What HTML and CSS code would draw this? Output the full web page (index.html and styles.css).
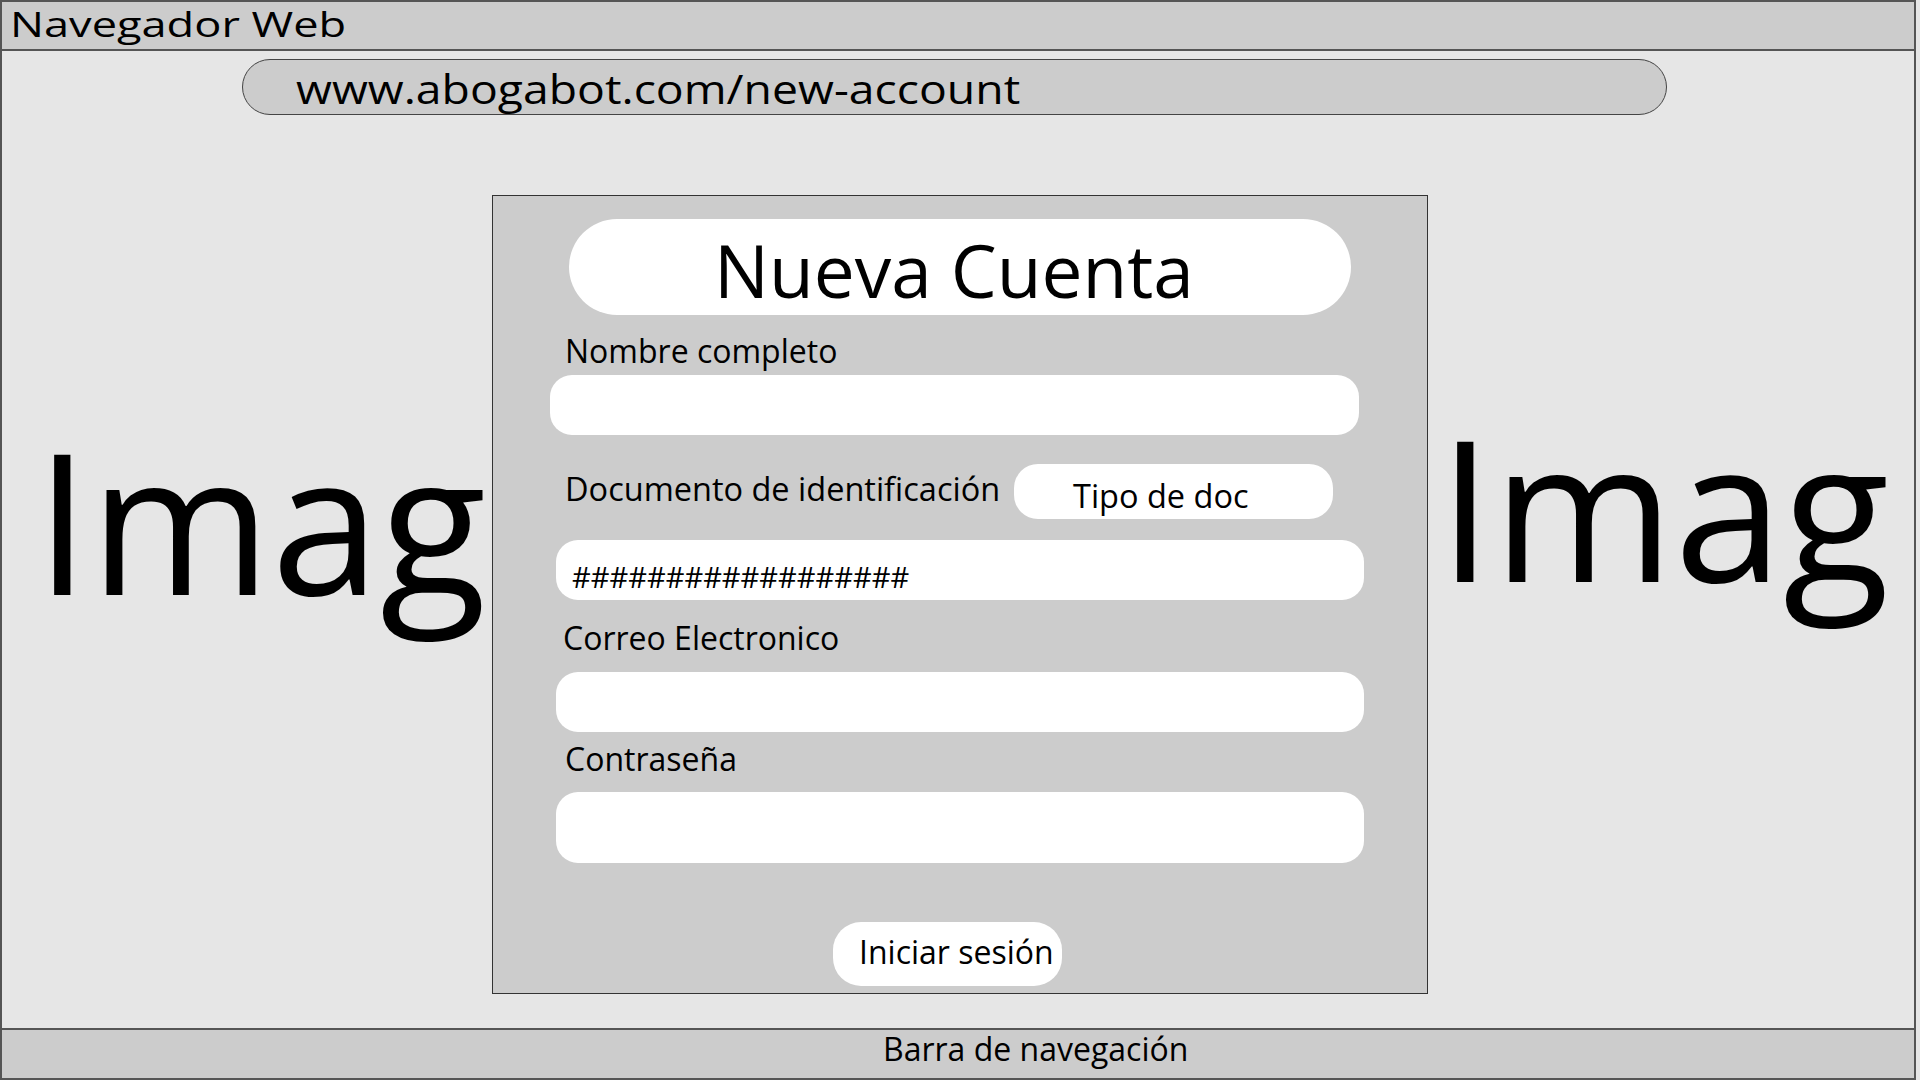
FILE: index.html
```html
<!DOCTYPE html>
<html lang="es">
<head>
<meta charset="utf-8">
<title>Nueva Cuenta</title>
<link rel="stylesheet" href="styles.css">
</head>
<body>
<div class="frame">
  <header class="topbar"><span class="wide-text wide-title">Navegador Web</span></header>
  <main class="viewport">
    <div class="urlbar"><span class="wide-text wide-url">www.abogabot.com/new-account</span></div>
    <div class="content">
      <div class="side side-left"><span class="imag">Imag</span></div>
      <section class="card">
        <div class="title-pill">Nueva Cuenta</div>
        <div class="label label-nombre">Nombre completo</div>
        <div class="field field-first"></div>
        <div class="doc-row">
          <div class="label label-doc">Documento de identificación</div>
          <div class="select-pill">Tipo de doc</div>
        </div>
        <div class="field field-doc"><span class="hashes">##################</span></div>
        <div class="label label-correo">Correo Electronico</div>
        <div class="field field-correo"></div>
        <div class="label label-pass">Contraseña</div>
        <div class="field field-pass"></div>
        <div class="submit">Iniciar sesión</div>
      </section>
      <div class="side side-right"><span class="imag">Imag</span></div>
    </div>
  </main>
  <footer class="bottombar">Barra de navegación</footer>
</div>
</body>
</html>
```
FILE: styles.css
```css
* { box-sizing: border-box; }
html, body {
  margin: 0;
  padding: 0;
  background: #e6e6e6;
  font-family: "Open Sans", "Liberation Sans", sans-serif;
  color: #000;
}
.frame {
  width: 1916px;
  height: 1080px;
  border-left: 2px solid #555;
  border-right: 2px solid #555;
  display: flex;
  flex-direction: column;
  overflow: hidden;
}
.wide-text {
  display: inline-block;
  transform-origin: left center;
  white-space: nowrap;
}
.wide-title { transform: scaleX(1.29); }
.wide-url { transform: scaleX(1.13); }
.topbar {
  height: 51px;
  background: #ccc;
  border-top: 2px solid #555;
  border-bottom: 2px solid #555;
  font-size: 35px;
  line-height: 35px;
  padding: 4px 0 0 8px;
}
.viewport {
  flex: 1;
  background: #e6e6e6;
  display: flex;
  flex-direction: column;
}
.urlbar {
  margin: 8px 0 0 240px;
  width: 1425px;
  height: 56px;
  border: 1.5px solid #444;
  border-radius: 28px;
  background: #ccc;
  font-size: 41px;
  line-height: 41px;
  padding: 8px 0 0 53px;
}
.content {
  margin-top: 80px;
  display: flex;
  align-items: flex-start;
}
.side {
  flex: 0 0 auto;
}
.side-left {
  width: 490px;
  padding: 226px 0 0 33px;
}
.side-right {
  flex: 1;
  padding: 213px 0 0 10px;
}
.imag {
  display: block;
  font-size: 196px;
  line-height: 196px;
  white-space: nowrap;
}
.card {
  flex: 0 0 936px;
  height: 799px;
  background: #ccc;
  border: 1px solid #333;
  display: flex;
  flex-direction: column;
  align-items: flex-start;
}
.title-pill {
  margin: 23px 0 0 76px;
  width: 782px;
  height: 96px;
  border-radius: 48px;
  background: #fff;
  font-size: 73px;
  line-height: 91px;
  padding: 5px 12px 0 0;
  text-align: center;
}
.label {
  font-size: 32px;
  line-height: 32px;
  margin-left: 72px;
  white-space: nowrap;
}
.label-nombre { margin-top: 20px; }
.field {
  background: #fff;
  border-radius: 22px;
  width: 808px;
  height: 60px;
  margin-left: 63px;
}
.field-first { margin: 8px 0 0 57px; width: 809px; }
.doc-row {
  margin-top: 29px;
  width: 100%;
  height: 55px;
  display: flex;
  align-items: flex-start;
  padding-right: 94px;
}
.label-doc { margin-top: 9px; font-size: 32.5px; }
.select-pill {
  margin-left: auto;
  width: 319px;
  height: 55px;
  border-radius: 24px;
  background: #fff;
  font-size: 32.5px;
  line-height: 33px;
  padding: 15px 0 0 59px;
  white-space: nowrap;
}
.field-doc {
  margin-top: 21px;
  padding: 22px 0 0 16px;
}
.hashes {
  display: block;
  font-size: 29px;
  line-height: 29px;
  white-space: nowrap;
}
.label-correo { margin-top: 22px; margin-left: 70px; }
.field-correo { margin-top: 18px; }
.label-pass { margin-top: 11px; }
.field-pass { margin-top: 17px; height: 71px; }
.submit {
  margin: 59px 0 0 340px;
  width: 229px;
  height: 64px;
  border-radius: 28px;
  background: #fff;
  font-size: 32px;
  line-height: 32px;
  padding: 14px 0 0 26px;
  white-space: nowrap;
}
.bottombar {
  height: 52px;
  background: #ccc;
  border-top: 2px solid #555;
  border-bottom: 2px solid #555;
  font-size: 32px;
  line-height: 32px;
  padding: 3px 0 0 881px;
  white-space: nowrap;
}
```
